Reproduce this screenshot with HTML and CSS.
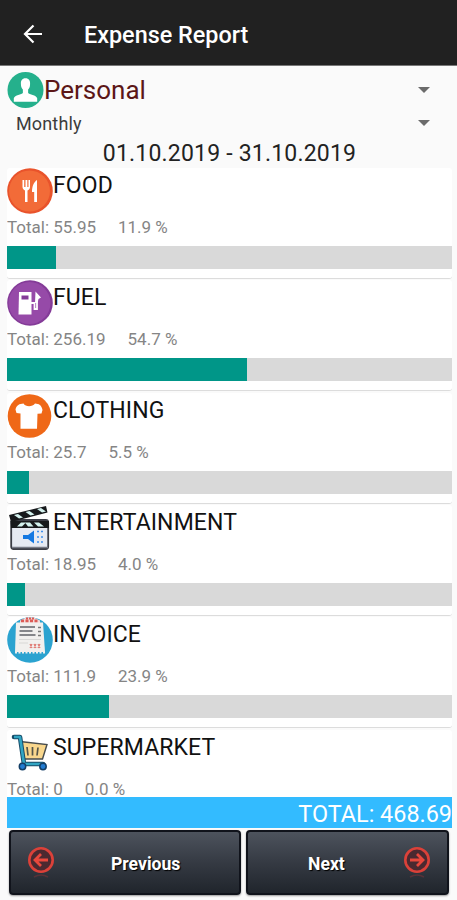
FILE: index.html
```html
<!DOCTYPE html>
<html lang="en">
<head>
  <meta charset="UTF-8" />
  <meta name="viewport" content="width=device-width, initial-scale=1.0" />
  <title>Expense Report</title>
  <link rel="stylesheet" href="styles.css">
</head>
<body>
  <header class="toolbar">
    <svg class="back" viewBox="0 0 20 20"><path d="M19 10H2M10.500 1.500L2 10l8.500 8.500" fill="none" stroke="#fff" stroke-width="2.200"/></svg>
    <h1>Expense Report</h1>
  </header>

  <main class="content">
    <div class="spinner account">
      <svg class="avatar" viewBox="0 0 38 38">
        <circle cx="19" cy="19" r="18.500" fill="#25b08c"/>
        <path d="M19 7c3.500 0 5 2.500 4.700 6 0 3-1.200 4.500-2 5.500v3.500c1 1.500 8.500 2 9.300 5.500v3.500H7v-3.500c.8-3.500 8.300-4 9.300-5.500v-3.500c-.8-1-2-2.500-2-5.500C14 9.500 15.500 7 19 7z" fill="#fff"/>
      </svg>
      <span class="account-name">Personal</span>
      <span class="arrow"></span>
    </div>
    <div class="spinner period">
      <span>Monthly</span>
      <span class="arrow"></span>
    </div>
    <div class="dates">01.10.2019 - 31.10.2019</div>

    <div class="list">
      <div class="card">
        <div class="head">
          <svg class="icon" viewBox="0 0 46 46">
            <circle cx="23" cy="23" r="22.800" fill="#e9532b"/>
            <circle cx="22.500" cy="23" r="20.500" fill="#f26b38"/>
            <path d="M15.500 12v7c0 2 1.500 3 2.500 3.500v11.500h2.500V22.500c1.200-.5 2.500-1.500 2.500-3.500v-7h-1.500v7h-1.200v-7h-1.800v7h-1.300v-7zM30 12c-3 2-5 6-5 12h2.200v10H30z" fill="#fff"/>
          </svg>
          <h2>FOOD</h2>
        </div>
        <div class="totals"><span>Total: 55.95</span><span>11.9 %</span></div>
        <div class="bar"><div class="fill" style="width: 10.900%"></div></div>
      </div>

      <div class="card">
        <div class="head">
          <svg class="icon" viewBox="0 0 46 46">
            <circle cx="23" cy="23" r="22.800" fill="#843b98"/>
            <circle cx="22.500" cy="23" r="21" fill="#964aa8"/>
            <path d="M12 12h12.500v22.500H11.500z" fill="#fff"/>
            <path d="M14.500 15.500h7v4h-7z" fill="#843b98"/>
            <path d="M24 23h3.500v6h2.500V19" fill="none" stroke="#fff" stroke-width="1.800"/>
            <path d="M28.500 11.500l5.500 6-2.500 1.500-1 4h-2.500z" fill="#fff"/>
          </svg>
          <h2>FUEL</h2>
        </div>
        <div class="totals"><span>Total: 256.19</span><span>54.7 %</span></div>
        <div class="bar"><div class="fill" style="width: 54%"></div></div>
      </div>

      <div class="card">
        <div class="head">
          <svg class="icon" viewBox="0 0 46 46">
            <circle cx="22.500" cy="23" r="21.800" fill="#ef6817"/>
            <path d="M16.500 10.500c2 3.500 9 3.500 11.500 0 4 .3 6.500 1.500 7.500 6.500l-1 3.500-4 .3-.5 15H13.500V20.500l-4-.5-1-3.500c1-4.500 4-5.700 8-6z" fill="#fff"/>
          </svg>
          <h2>CLOTHING</h2>
        </div>
        <div class="totals"><span>Total: 25.7</span><span>5.5 %</span></div>
        <div class="bar"><div class="fill" style="width: 4.900%"></div></div>
      </div>

      <div class="card">
        <div class="head">
          <svg class="icon" viewBox="0 0 46 46">
            <rect x="4.200" y="15" width="37" height="29" rx="2.500" fill="#e6eaf3" stroke="#3b3d46" stroke-width="1.800"/>
            <path d="M5 42.500h36" stroke="#777b87" stroke-width="1.500"/>
            <path d="M2 10L39 1l1.500 6.500L4 17z" fill="#17191c"/>
            <path d="M3.500 16H42v7H4z" fill="#17191c"/>
            <path d="M7 10l5 3.500 4-1-5-3.500zM18.500 7l5 3.500 4-1-5-3.500zM30 4l5 3.500 4-1-5-3.500zM10 21.500l4-4h5l-4 4zM21 21.500l-3-4h5l3.500 4zM31 21.500l-4-4h5l5 4z" fill="#d4f2ef"/>
            <path d="M16 30h5l6-4.500v13L21 34h-5z" fill="#1478e2"/>
            <path d="M30 26.500h2M34 26.500h2M30 32h2M34 32h2M30 37h2M34 37h2" stroke="#3f91ee" stroke-width="1.500"/>
          </svg>
          <h2>ENTERTAINMENT</h2>
        </div>
        <div class="totals"><span>Total: 18.95</span><span>4.0 %</span></div>
        <div class="bar"><div class="fill" style="width: 4.100%"></div></div>
      </div>

      <div class="card">
        <div class="head">
          <svg class="icon" viewBox="0 0 46 46">
            <circle cx="23" cy="23" r="22.800" fill="#2ba3d0"/>
            <path d="M13 3.500Q23-3 33 3.500v3H13z" fill="#f3d9d7"/>
            <path d="M14 4h18" stroke="#dc5c56" stroke-width="3" stroke-dasharray="3 1.500"/>
            <path d="M19 1.500h9" stroke="#dc5c56" stroke-width="2" stroke-dasharray="2 1"/>
            <path d="M9 5.500h27L38 35H8z" fill="#f1f0ee"/>
            <path d="M8 35.500h30" stroke="#f1f0ee" stroke-width="2" stroke-dasharray="2 1.500"/>
            <path d="M13 10h15M12.500 14h13M12.500 18h16" stroke="#616369" stroke-width="1.400"/>
            <path d="M31 10.500h3M31 14.500h3M31 18.500h3" stroke="#777" stroke-width="1.300"/>
            <path d="M12 22.500h22M12 26h9" stroke="#d8d8d6" stroke-width="1"/>
            <path d="M23 27l2 4m0-4l-2 4m4-4l2 4m0-4l-2 4m4-4l2 4m0-4l-2 4" stroke="#df7770" stroke-width="1.200"/>
          </svg>
          <h2>INVOICE</h2>
        </div>
        <div class="totals"><span>Total: 111.9</span><span>23.9 %</span></div>
        <div class="bar"><div class="fill" style="width: 22.900%"></div></div>
      </div>

      <div class="card">
        <div class="head">
          <svg class="icon" viewBox="0 0 46 46">
            <path d="M13 11.500l27 3-4.500 14.500H16z" fill="#f9d78d" stroke="#474c4d" stroke-width="1.400"/>
            <path d="M20 17l1 8.500M25.500 17v8.500M31 17.500l-1 8" stroke="#555548" stroke-width="1.700"/>
            <path d="M7 7h6L17 34H36" fill="none" stroke="#174b67" stroke-width="4.600" stroke-linejoin="round" stroke-linecap="round"/>
            <path d="M7 7h6L17 34H36" fill="none" stroke="#31a5c3" stroke-width="2.600" stroke-linejoin="round"/>
            <circle cx="15.500" cy="36.500" r="3.200" fill="#217bd1" stroke="#133e66" stroke-width="1.500"/>
            <circle cx="36" cy="36.500" r="3.200" fill="#217bd1" stroke="#133e66" stroke-width="1.500"/>
          </svg>
          <h2>SUPERMARKET</h2>
        </div>
        <div class="totals"><span>Total: 0</span><span>0.0 %</span></div>
        <div class="bar"></div>
      </div>
    </div>

    <div class="grand-total">TOTAL: 468.69</div>

    <div class="buttons">
      <button class="prev">
        <svg class="nav-icon" viewBox="0 0 28 34">
          <circle cx="14" cy="14" r="11.700" fill="#4b2930" stroke="#db4139" stroke-width="2.600"/>
          <path d="M21 14H9M14 8l-6 6 6 6" fill="none" stroke="#e8483c" stroke-width="2.800"/>
          <path d="M7 31q7-4 14 0" fill="none" stroke="#713438" stroke-width="1.500" opacity=".6"/>
        </svg>
        <span>Previous</span>
      </button>
      <button class="next">
        <span>Next</span>
        <svg class="nav-icon" viewBox="0 0 28 34">
          <circle cx="14" cy="14" r="11.700" fill="#4b2930" stroke="#db4139" stroke-width="2.600"/>
          <path d="M7 14h12M14 8l6 6-6 6" fill="none" stroke="#e8483c" stroke-width="2.800"/>
          <path d="M7 31q7-4 14 0" fill="none" stroke="#713438" stroke-width="1.500" opacity=".6"/>
        </svg>
      </button>
    </div>
  </main>
</body>
</html>
```
FILE: styles.css
```css
* {
  box-sizing: border-box;
}
body {
  margin: 0;
  height: 900px;
  overflow: hidden;
  font-family: Roboto, sans-serif;
  background-color: #fafafa;
}
h1, h2 {
  margin: 0;
}
.toolbar {
  display: flex;
  align-items: center;
  height: 66px;
  padding: 2px 0 0 23px;
  background-color: #212121;
  border-bottom: 1px solid #777;
  color: #fff;
}
.back {
  width: 20px;
  height: 20px;
  margin-right: 41px;
}
h1 {
  padding-top: 2px;
  font-size: 23.400px;
  font-weight: 500;
}
.content {
  padding: 5px 5px 0 7px;
}
.spinner {
  display: flex;
  align-items: center;
}
.account {
  height: 38px;
}
.avatar {
  width: 37px;
  height: 38px;
}
.account-name {
  font-size: 26px;
  color: #5c1717;
}
.arrow {
  margin-left: auto;
  margin-right: 22px;
  border-left: 6px solid transparent;
  border-right: 6px solid transparent;
  border-top: 6px solid #6b6b6b;
}
.period {
  height: 28px;
  padding-left: 9px;
  font-size: 18px;
  letter-spacing: 0.150px;
  color: #3c3c3c;
}
.dates {
  height: 31px;
  line-height: 34px;
  text-align: center;
  font-size: 23px;
  letter-spacing: 0.200px;
  color: #222;
}
.list {
  height: 629px;
  overflow: hidden;
}
.card {
  height: 111px;
  margin-bottom: 1.350px;
  background-color: #fff;
  border-bottom: 1px solid #dcdcdc;
  border-radius: 3px;
}
.head {
  display: flex;
  height: 46px;
}
.icon {
  width: 46px;
  height: 46px;
}
h2 {
  line-height: 35px;
  font-size: 23px;
  font-weight: 400;
  letter-spacing: 0.100px;
  color: #111;
}
.totals {
  display: flex;
  gap: 22px;
  height: 32px;
  line-height: 26px;
  font-size: 17px;
  color: #858585;
}
.bar {
  height: 23px;
  background-color: #d9d9d9;
}
.fill {
  height: 100%;
  background-color: #009688;
}
.grand-total {
  height: 31px;
  line-height: 34px;
  background-color: #33bbff;
  text-align: right;
  font-size: 23.400px;
  color: #fff;
}
.buttons {
  display: flex;
  gap: 5px;
  padding: 2px 2px 0;
}
button {
  display: flex;
  align-items: center;
  height: 65px;
  padding: 0;
  border: 2px solid #10131b;
  border-radius: 4px;
  background: linear-gradient(#4d535d, #353a43 50%, #20252c);
  box-shadow: 0 1px 2px #999;
  font-family: Roboto, sans-serif;
  font-size: 17.600px;
  font-weight: 700;
  color: #fff;
  text-shadow: 1px 1px 1px #000;
}
button span {
  padding-top: 2px;
}
.prev {
  width: 232px;
  padding-left: 16px;
}
.prev span {
  margin-left: 56px;
}
.next {
  width: 203px;
  padding-left: 60px;
}
.nav-icon {
  width: 28px;
  height: 34px;
}
.next .nav-icon {
  margin-left: auto;
  margin-right: 16px;
}
```
